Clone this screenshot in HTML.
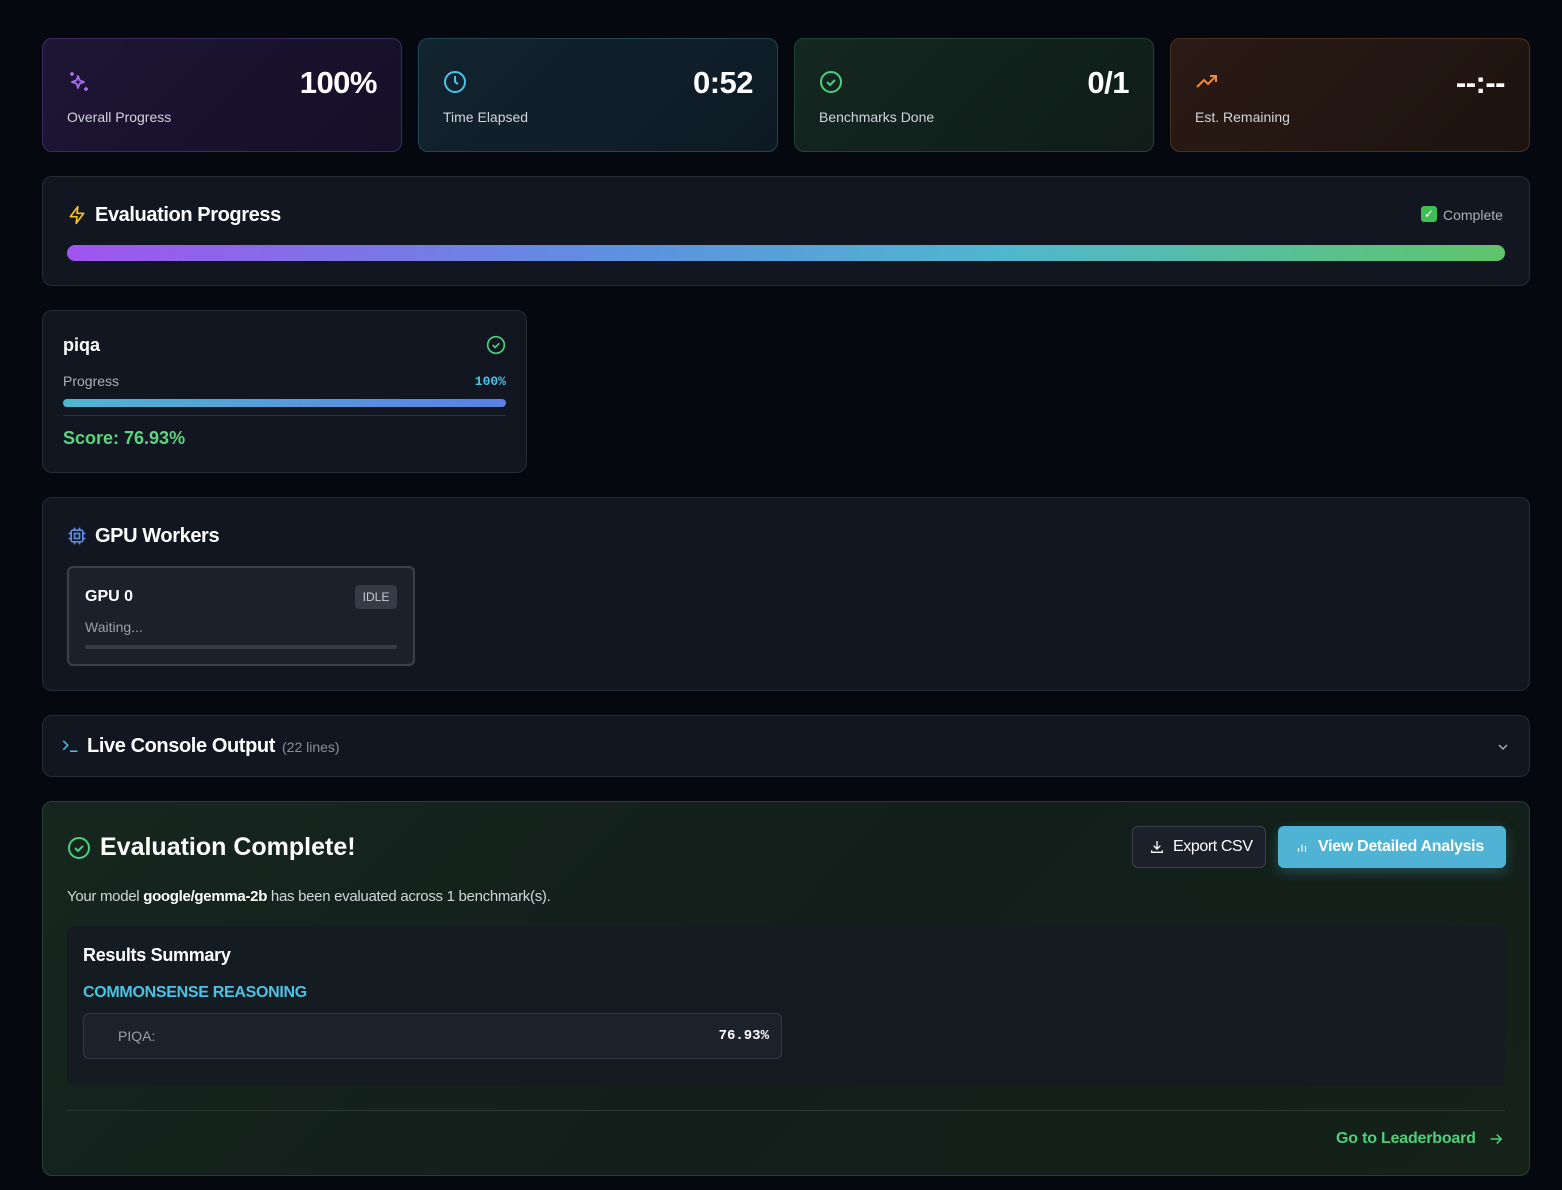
<!DOCTYPE html>
<html><head><meta charset="utf-8"><style>
*{box-sizing:border-box;margin:0;padding:0}
body{width:1562px;height:1190px;background:#05080f;font-family:"Liberation Sans",sans-serif;color:#e5e7eb;position:relative;overflow:hidden}
.abs{position:absolute}
.stat{position:absolute;top:38px;width:360px;height:114px;border-radius:10px;border:1px solid}
.stat .val{position:absolute;right:24px;top:26px;font-size:31px;font-weight:bold;color:#fff;letter-spacing:-0.5px}
.stat .lbl{position:absolute;left:24px;top:70px;font-size:14px;color:#d1d5db}
.stat svg{position:absolute;left:24px;top:31px}
.panel{position:absolute;background:#121620;border:1px solid #252b37;border-radius:10px}
h3{font-size:20px;font-weight:bold;color:#fff;letter-spacing:-0.4px}
</style></head><body>
<div class="stat" style="left:42px;background:linear-gradient(135deg,#1e1635,#150f28);border-color:#3d2a63">
<svg width="24" height="24" viewBox="0 0 24 24" fill="none" stroke="#a66cf0" stroke-width="1.8" stroke-linejoin="round"><path d="M11 6l1.6 4.4L17 12l-4.4 1.6L11 18l-1.6-4.4L5 12l4.4-1.6z"/><path d="M5 2v4M3 4h4M19 17v4M17 19h4"/></svg>
<div class="val">100%</div><div class="lbl">Overall Progress</div></div>
<div class="stat" style="left:418px;background:linear-gradient(135deg,#12242f,#0d1a24);border-color:#1f4656">
<svg width="24" height="24" viewBox="0 0 24 24" fill="none" stroke="#4cc3e6" stroke-width="2"><circle cx="12" cy="12" r="10"/><path d="M12 6v6l3 2"/></svg>
<div class="val">0:52</div><div class="lbl">Time Elapsed</div></div>
<div class="stat" style="left:794px;background:linear-gradient(135deg,#142720,#0f1c18);border-color:#23452f">
<svg width="24" height="24" viewBox="0 0 24 24" fill="none" stroke="#4ed07a" stroke-width="2"><circle cx="12" cy="12" r="10"/><path d="M8 12l3 3 5-5"/></svg>
<div class="val">0/1</div><div class="lbl">Benchmarks Done</div></div>
<div class="stat" style="left:1170px;background:linear-gradient(135deg,#2a1a15,#1e130f);border-color:#4d2f20">
<svg width="24" height="24" viewBox="0 0 24 24" fill="none" stroke="#f08a3c" stroke-width="2"><path d="M2 17l7-7 4 4 8-8M15 6h6v6"/></svg>
<div class="val">--:--</div><div class="lbl">Est. Remaining</div></div>

<div class="panel" style="left:42px;top:176px;width:1488px;height:110px">
<svg class="abs" style="left:24px;top:28px" width="20" height="20" viewBox="0 0 24 24" fill="none" stroke="#f2c12e" stroke-width="2" stroke-linejoin="round"><path d="M13 2L4 14h8l-1 8 9-12h-8z"/></svg>
<h3 class="abs" style="left:52px;top:27px">Evaluation Progress</h3>
<div class="abs" style="left:1378px;top:29px;width:16px;height:16px;background:#3dbf54;border-radius:3px;color:#fff;font-size:12px;text-align:center;line-height:16px">✓</div>
<div class="abs" style="left:1400px;top:30px;font-size:14px;color:#aab0bb">Complete</div>
<div class="abs" style="left:24px;top:68px;width:1438px;height:16px;border-radius:8px;background:linear-gradient(90deg,#a055ee,#5b93df 40%,#4fb7cf 65%,#5ec56a)"></div>
</div>

<div class="panel" style="left:42px;top:310px;width:485px;height:163px">
<div class="abs" style="left:20px;top:24px;font-size:18px;font-weight:bold;color:#fff">piqa</div>
<svg class="abs" style="left:443px;top:24px" width="20" height="20" viewBox="0 0 24 24" fill="none" stroke="#4ed07a" stroke-width="2"><circle cx="12" cy="12" r="10"/><path d="M8 12l3 3 5-5"/></svg>
<div class="abs" style="left:20px;top:62px;font-size:14px;color:#aab0bb">Progress</div>
<div class="abs" style="right:20px;top:63px;font-size:13px;color:#4cc3e6;font-family:'Liberation Mono',monospace;font-weight:bold">100%</div>
<div class="abs" style="left:20px;top:88px;width:443px;height:8px;border-radius:4px;background:linear-gradient(90deg,#4fb7cf,#5b7fe6)"></div>
<div class="abs" style="left:20px;top:104px;width:443px;height:1px;background:#2b313d"></div>
<div class="abs" style="left:20px;top:117px;font-size:18px;font-weight:bold;color:#5dd47e">Score: 76.93%</div>
</div>

<div class="panel" style="left:42px;top:497px;width:1488px;height:194px">
<svg class="abs" style="left:24px;top:28px" width="20" height="20" viewBox="0 0 24 24" fill="none" stroke="#5b8de6" stroke-width="2"><rect x="5" y="5" width="14" height="14" rx="2"/><rect x="9" y="9" width="6" height="6"/><path d="M9 2v3M15 2v3M9 19v3M15 19v3M2 9h3M2 15h3M19 9h3M19 15h3"/></svg>
<h3 class="abs" style="left:52px;top:27px">GPU Workers</h3>
<div class="abs" style="left:24px;top:68px;width:348px;height:100px;border:2px solid #3a404c;border-radius:6px;background:#1b202b">
<div class="abs" style="left:16px;top:20px;font-size:16px;font-weight:bold;color:#fff">GPU 0</div>
<div class="abs" style="left:286px;top:17px;width:42px;height:24px;background:#353b47;border-radius:4px;font-size:12px;color:#c8ccd4;text-align:center;line-height:24px">IDLE</div>
<div class="abs" style="left:16px;top:51px;font-size:14px;color:#9aa0ab">Waiting...</div>
<div class="abs" style="left:16px;top:77px;width:312px;height:4px;border-radius:2px;background:#353b47"></div>
</div></div>

<div class="panel" style="left:42px;top:715px;width:1488px;height:62px">
<svg class="abs" style="left:18px;top:21px" width="18" height="18" viewBox="0 0 24 24" fill="none" stroke="#4cc3e6" stroke-width="2"><path d="M3 5l6 6-6 6M12 19h10"/></svg>
<h3 class="abs" style="left:44px;top:19px">Live Console Output</h3>
<div class="abs" style="left:239px;top:23px;font-size:14px;color:#8a909b">(22 lines)</div>
<svg class="abs" style="left:1452px;top:23px" width="16" height="16" viewBox="0 0 24 24" fill="none" stroke="#aab0bb" stroke-width="2"><path d="M6 9l6 6 6-6"/></svg>
</div>

<div class="panel" style="left:42px;top:801px;width:1488px;height:375px;background:linear-gradient(135deg,#16261f,#121e1a 50%,#142219);border-color:#28402f">
<svg class="abs" style="left:24px;top:34px" width="24" height="24" viewBox="0 0 24 24" fill="none" stroke="#4ed07a" stroke-width="2"><circle cx="12" cy="12" r="10"/><path d="M8 12l3 3 5-5"/></svg>
<div class="abs" style="left:57px;top:31px;font-size:25px;font-weight:bold;color:#fff">Evaluation Complete!</div>
<div class="abs" style="left:1089px;top:24px;width:134px;height:42px;border:1px solid #3a404c;border-radius:6px;background:#1b202a;font-size:16px;color:#fff;line-height:40px;padding-left:40px;letter-spacing:-0.4px">Export CSV
<svg class="abs" style="left:16px;top:12px" width="16" height="16" viewBox="0 0 24 24" fill="none" stroke="#fff" stroke-width="2"><path d="M12 3v12M7 10l5 5 5-5M4 17v3h16v-3"/></svg></div>
<div class="abs" style="left:1235px;top:24px;width:228px;height:42px;border-radius:6px;background:#4fb3d5;font-size:16px;font-weight:bold;color:#fff;line-height:42px;padding-left:40px;letter-spacing:-0.3px;box-shadow:0 4px 12px rgba(79,179,213,.3)">View Detailed Analysis
<svg class="abs" style="left:17px;top:14px" width="14" height="14" viewBox="0 0 24 24" fill="none" stroke="#fff" stroke-width="2"><path d="M6 20v-6M12 20V8M18 20v-10"/></svg></div>
<div class="abs" style="left:24px;top:86px;font-size:15px;color:#d1d5db;letter-spacing:-0.3px">Your model <b style="color:#fff">google/gemma-2b</b> has been evaluated across 1 benchmark(s).</div>
<div class="abs" style="left:24px;top:124px;width:1438px;height:160px;background:#141c22;border-radius:8px">
<div class="abs" style="left:16px;top:19px;font-size:18px;font-weight:bold;color:#fff;letter-spacing:-0.3px">Results Summary</div>
<div class="abs" style="left:16px;top:58px;font-size:16px;font-weight:bold;color:#4cc3e6;letter-spacing:-0.3px">COMMONSENSE REASONING</div>
<div class="abs" style="left:16px;top:87px;width:699px;height:46px;border:1px solid #333a46;border-radius:6px;background:#1c222c">
<div class="abs" style="left:34px;top:14px;font-size:14px;color:#9aa0ab">PIQA:</div>
<div class="abs" style="right:12px;top:14px;font-size:14px;color:#fff;font-family:'Liberation Mono',monospace;font-weight:bold">76.93%</div></div>
</div>
<div class="abs" style="left:24px;top:308px;width:1438px;height:1px;background:#2a3a31"></div>
<div class="abs" style="left:1293px;top:328px;font-size:16px;font-weight:bold;color:#4ed07a;letter-spacing:-0.2px">Go to Leaderboard</div>
<svg class="abs" style="left:1444px;top:328px" width="18" height="18" viewBox="0 0 24 24" fill="none" stroke="#4ed07a" stroke-width="2"><path d="M5 12h14M13 6l6 6-6 6"/></svg>
</div>
</body></html>
